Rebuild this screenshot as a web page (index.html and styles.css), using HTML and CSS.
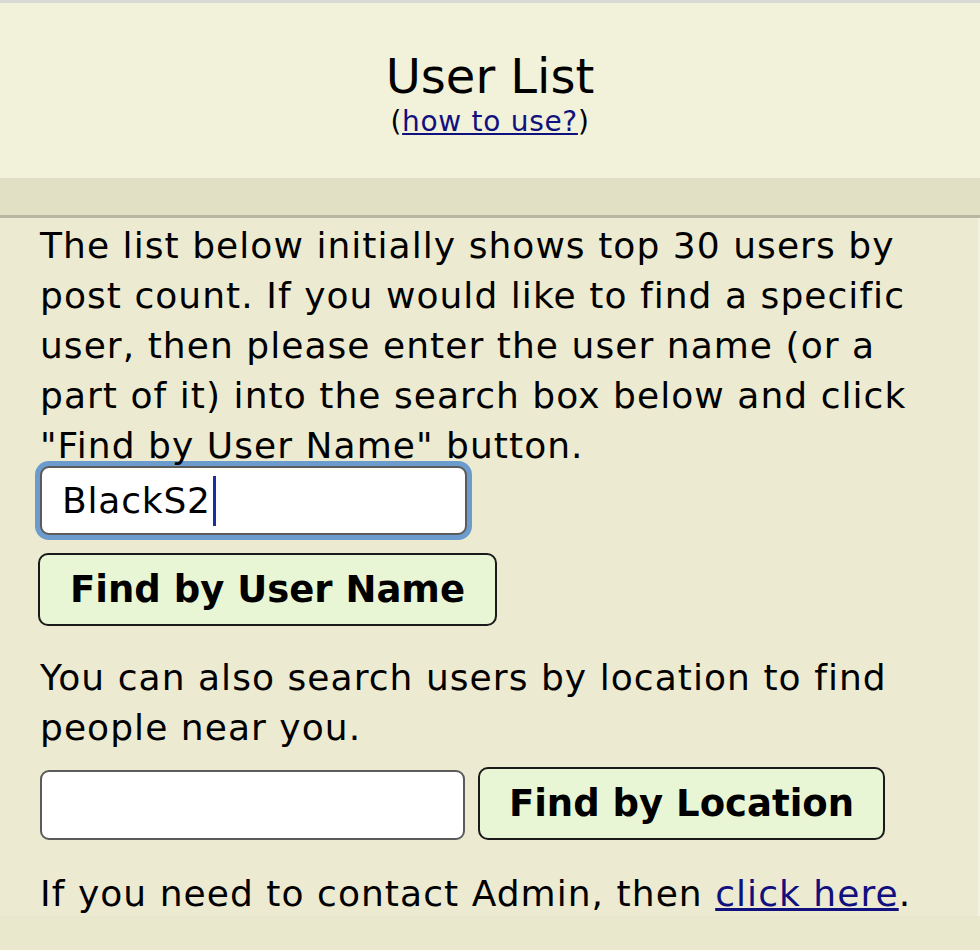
FILE: index.html
```html
<!DOCTYPE html>
<html>
    <head>
        <meta charset="UTF-8">
        <title>User List</title>
        <link rel="stylesheet" href="styles.css">
    </head>
    <body>
        <div class="topLine"></div>
        <div class="pageHead">
            <div class="title">User List</div>
            <div class="howTo">(<a href="#">how to use?</a>)</div>
        </div>
        <div class="band"></div>
        <div class="panel">
            <p class="intro">The list below initially shows top 30 users by post count. If you would like to find a specific user, then please enter the user name (or a part of it) into the search box below and click "Find by User Name" button.</p>
            <div class="field focused"><span class="typed">BlackS2</span><span class="caret"></span></div>
            <button class="findBtn nameBtn">Find by User Name</button>
            <p class="also">You can also search users by location to find people near you.</p>
            <div class="rowOfFlex">
                <div class="field locField"></div>
                <button class="findBtn locBtn">Find by Location</button>
            </div>
            <p class="contact">If you need to contact Admin, then <a href="#">click here</a>.</p>
        </div>
    </body>
</html>
```

FILE: styles.css
```css
* {
    box-sizing: border-box;
    font-family: 'DejaVu Sans', Verdana, sans-serif; }

html, body {
    background: #e9e7cc; color: #000;
    margin: 0; padding: 0;
    width: 100%; height: 100%; }

a { color: #10107e; }

.topLine {
    height: 3px;
    background: #d9d9d6; }

.pageHead {
    height: 175px;
    background: #f2f1da;
    text-align: center;
    padding-top: 44px; }
.title {
    font-size: 48px;
    line-height: 58px; }
.howTo {
    font-size: 28px;
    line-height: 34px;
    letter-spacing: 0.7px; }

.band {
    height: 40px;
    background: #e1dfc4;
    border-bottom: 3px solid #b9b7a1; }

.panel {
    background: #ecead0;
    border-right: 2px solid #f3f2e0;
    padding: 3px 36px 0 40px; }
.panel p {
    margin: 0;
    font-size: 36px;
    line-height: 50px;
    letter-spacing: 1.05px; }
.also { margin-top: 27px !important; }
.contact {
    margin-top: 31px !important;
    line-height: 45px !important; }

.field {
    height: 70px;
    background: #fff;
    border: 2px solid #5b5b5b;
    border-radius: 9px;
    display: flex;
    align-items: center;
    padding-left: 20px;
    font-size: 36px;
    letter-spacing: 0.8px; }
.focused {
    width: 427px;
    height: 69px;
    margin-top: -5px;
    box-shadow: 0 0 0 5px #6b9ccd; }
.caret {
    display: inline-block;
    width: 3px; height: 50px;
    margin-left: 2px;
    background: #1a2fa0; }

.findBtn {
    height: 73px;
    background: #e9f6d5;
    border: 2px solid #1a1a1a;
    border-radius: 10px;
    font-size: 37px;
    font-weight: bold;
    color: #000;
    padding: 0; }
.nameBtn {
    display: block;
    margin: 18px 0 0 -2px;
    width: 459px; }

.rowOfFlex {
    display: flex;
    align-items: flex-end;
    gap: 13px;
    margin-top: 14px; }
.locField { width: 425px; }
.locBtn { width: 407px; }
```
